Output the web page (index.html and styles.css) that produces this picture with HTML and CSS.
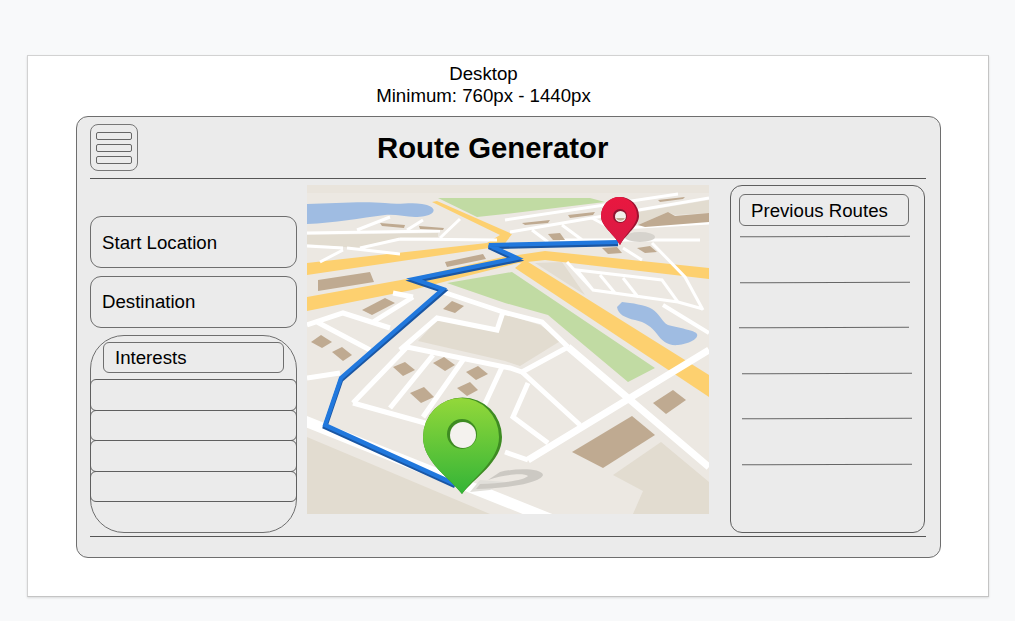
FILE: index.html
```html
<!DOCTYPE html>
<html lang="en">
<head>
<meta charset="utf-8">
<title>Route Generator wireframe</title>
<link rel="stylesheet" href="styles.css">
</head>
<body>
<main class="sheet">
  <p class="caption">Desktop<br>Minimum: 760px - 1440px</p>
  <section class="frame">
    <header class="topbar">
      <button class="menu" aria-label="Menu"><span></span><span></span><span></span></button>
      <h1 class="title">Route Generator</h1>
    </header>
    <div class="content">
      <aside class="left">
        <div class="field">Start Location</div>
        <div class="field">Destination</div>
        <div class="interests">
          <div class="interests-title">Interests</div>
          <div class="interest"></div>
          <div class="interest"></div>
          <div class="interest"></div>
          <div class="interest"></div>
        </div>
      </aside>
      <svg class="map" viewBox="307 185 402 329" role="img" aria-label="Map with a route">
        <defs>
          <linearGradient id="greenPin" x1="0" y1="0" x2="0" y2="1">
            <stop offset="0" stop-color="#93d83a"/>
            <stop offset="1" stop-color="#33b437"/>
          </linearGradient>
          <linearGradient id="redPin" x1="0" y1="0" x2="0" y2="1">
            <stop offset="0" stop-color="#e9173f"/>
            <stop offset="1" stop-color="#d91a45"/>
          </linearGradient>
        </defs>
        <rect x="307" y="185" width="402" height="329" fill="#ece8e2"/>
        <rect x="307" y="185" width="402" height="8" fill="#e9e4dc"/>
        <g fill="#e2dcd0">
          <polygon points="307,437 490,514 307,514"/>
          <polygon points="613,475 661,442 709,482 709,514 633,514 643,491"/>
          <polygon points="307,235 438,233 438,237 400,238 357,248 307,244"/>
          <polygon points="638,212 709,200 709,213 675,215 668,212 638,225"/>
          <polygon points="535,263 562,262 585,295"/>
          <polygon points="418,341 437,320 497,331 505,314 540,325 562,340 520,366 505,361"/>
        </g>
        <path fill="#9fbce2" d="M307 204C335 203 365 201 385 203C400 205 410 202 422 204C437 206 437 214 425 216C410 219 400 214 385 215C360 218 335 223 307 224Z"/>
        <path fill="#9fbce2" d="M617 307L622 302C632 303 645 305 652 309C660 314 662 322 668 325C678 328 695 330 697 334C699 339 688 344 678 345C668 346 662 341 657 334C652 327 645 322 635 320C625 318 618 314 617 307Z"/>
        <g fill="#c1dba3">
          <polygon points="438,198 590,198 605,202 505,214 477,217"/>
          <polygon points="447,283 512,272 655,368 628,382 548,315 505,303"/>
        </g>
        <g fill="#fdd06f">
          <polygon points="432,202 437,201 512,234 503,246 307,275 307,263 487,243 500,235"/>
          <polygon points="307,297 412,278 507,256 518,255 545,251 709,268 709,279 545,260 518,263 412,290 307,311"/>
          <polygon points="525,260 709,375 709,397 515,268"/>
        </g>
        <g fill="none" stroke="#fff" stroke-width="3">
          <path d="M307 233L440 231M400 239L497 240M360 248L400 239M307 246L343 248M347 248L400 254M320 262L343 250M357 230L390 217M407 230L423 220M440 238L460 219"/>
          <path d="M505 220L678 194M510 232L709 198M532 230L548 242M562 225L585 242M592 218L605 225M622 228L709 223M560 240L700 240M623 248L642 260"/>
          <path d="M652 243L685 277L703 310M577 270L662 280L678 302L593 290ZM600 275L615 293M623 278L638 297M567 262L593 290M678 302L703 309"/>
        </g>
        <path d="M663 305L709 333" fill="none" stroke="#fff" stroke-width="4"/>
        <g fill="none" stroke="#fff" stroke-width="5">
          <path d="M307 325L343 313L390 328M317 322L370 350M413 297L373 322M393 293L413 297"/>
          <path d="M443 292L503 312L497 330L437 318L400 350M503 312L542 322L568 347"/>
          <path d="M353 403L407 347L510 368L522 372L568 347M390 408L433 355M423 417L463 360M483 408L503 365M353 403L443 428"/>
          <path d="M307 378L340 373M522 372L580 425M528 383L513 417L548 443M505 452L528 460"/>
        </g>
        <g fill="none" stroke="#fff" stroke-width="7">
          <path d="M528 460L709 350M568 347L709 467"/>
        </g>
        <path d="M300 419L565 525" fill="none" stroke="#fff" stroke-width="11"/>
        <g fill="#bfaa91">
          <polygon points="380,223 405,225 404,228 382,226"/>
          <polygon points="419,226 444,228 443,230 420,229"/>
          <polygon points="445,262 483,254 486,259 447,267"/>
          <polygon points="318,280 370,272 374,282 318,291"/>
          <polygon points="362,310 385,298 395,303 372,315"/>
          <polygon points="443,309 452,301 464,306 455,313"/>
          <polygon points="311,342 321,335 332,342 322,348"/>
          <polygon points="332,352 342,347 352,355 343,361"/>
          <polygon points="393,367 405,362 415,370 403,376"/>
          <polygon points="433,363 444,357 455,365 445,371"/>
          <polygon points="466,372 478,366 488,374 476,380"/>
          <polygon points="457,388 470,382 478,390 467,396"/>
          <polygon points="410,393 424,387 434,397 421,403"/>
          <polygon points="653,403 673,390 686,400 666,414"/>
          <polygon points="572,452 632,416 655,435 603,468"/>
          <polygon points="522,223 550,220 548,223 525,225"/>
          <polygon points="568,215 595,212 593,215 570,218"/>
          <polygon points="658,200 685,197 683,199 660,202"/>
          <polygon points="638,225 668,212 675,216 709,213 709,222 645,227"/>
          <polygon points="548,234 560,233 565,240 553,240"/>
          <polygon points="602,248 617,247 622,253 608,254"/>
          <polygon points="637,248 650,246 657,252 645,253"/>
        </g>
        <ellipse cx="640" cy="237" rx="15" ry="5" fill="#d6d3cd"/>
        <path fill="#e1dfda" d="M470 492L490 490L505 482L480 480Z"/>
        <path fill="#ccc9c3" d="M476 489C500 489 540 484 543 475C542 468 515 468 500 472L488 480C505 474 525 473 528 476C525 480 500 484 480 484Z"/>
        <polyline points="455,486 325,427 341,380 444,291 414,281 517,260 489,247 618,244" fill="none" stroke="#1a56a3" stroke-width="4.500"/>
        <polyline points="455,484 325,425 341,378 443,289 414,279 517,258 489,245 618,242" fill="none" stroke="#2178dd" stroke-width="4.200"/>
        <path fill="#9c1230" d="M620 245C614 234 601 226 601 216A19 19 0 1 1 639 216C639 226 626 234 620 245Z"/>
        <path fill="url(#redPin)" d="M620 245C614 234 601 226 601 216A18 19 0 1 1 637 216C637 225 625 234 620 245Z"/>
        <circle cx="620" cy="216" r="7" fill="#8e1530"/>
        <circle cx="620.500" cy="216.500" r="5.500" fill="#f3f0ea"/>
        <path d="M616 218A5 5 0 0 0 625 218Z" fill="#bfaa91"/>
        <path fill="#3e8b22" d="M462 494C450 478 423 462 423 437A39 39 0 1 1 502 437C502 462 474 478 462 494Z"/>
        <path fill="url(#greenPin)" d="M462 494C450 478 423 462 423 437A38 39 0 1 1 499 437C499 461 472 478 462 494Z"/>
        <circle cx="462" cy="434" r="15" fill="#3e8b22"/>
        <circle cx="463" cy="435" r="13" fill="#f4f2ee"/>
      </svg>
      <aside class="right">
        <div class="routes-title">Previous Routes</div>
        <div class="routes">
          <div class="route"></div>
          <div class="route"></div>
          <div class="route route-back"></div>
          <div class="route route-forward"></div>
          <div class="route route-forward"></div>
          <div class="route route-forward"></div>
        </div>
      </aside>
    </div>
  </section>
</main>
</body>
</html>
```

FILE: styles.css
```css
* {
  box-sizing: border-box;
}

html,
body {
  margin: 0;
  height: 100%;
}

body {
  background: #f8f9fa;
  padding: 55px 0 0 27px;
  font-family: "Liberation Sans", Arial, sans-serif;
  color: #000;
  overflow: hidden;
}

.sheet {
  width: 962px;
  height: 542px;
  background: #fff;
  border: 1px solid #d2d2d2;
  border-right-color: #c4c4c4;
  border-bottom-color: #c4c4c4;
  box-shadow: 0 1px 2px rgba(0, 0, 0, 0.12);
  padding: 7px 0 0 48px;
}

.caption {
  width: 815px;
  margin: 0;
  text-align: center;
  font-size: 18.670px;
  line-height: 22px;
}

.frame {
  width: 865px;
  height: 442px;
  margin-top: 9px;
  padding: 7px 14px 0 13px;
  background: #ebebeb;
  border: 1px solid #6e6e6e;
  border-radius: 12px;
}

.topbar {
  display: flex;
  align-items: center;
  height: 55px;
  padding-bottom: 7px;
  border-bottom: 1px solid #555;
}

.menu {
  flex: none;
  display: flex;
  flex-direction: column;
  justify-content: center;
  gap: 4px;
  width: 48px;
  height: 47px;
  padding: 0 5px;
  background: transparent;
  border: 1px solid #777;
  border-radius: 8px;
}

.menu span {
  display: block;
  height: 8px;
  border: 1px solid #666;
  border-radius: 2px;
}

.title {
  margin: 0 0 0 239px;
  font-size: 29.330px;
  font-weight: 700;
  line-height: 34px;
}

.content {
  display: flex;
  height: 358px;
  border-bottom: 1px solid #555;
}

.left {
  flex: none;
  width: 207px;
  padding-top: 37px;
}

.field {
  display: flex;
  align-items: center;
  height: 52px;
  margin-bottom: 8px;
  padding: 2px 0 0 11px;
  font-size: 18.670px;
  border: 1px solid #6e6e6e;
  border-radius: 11px;
}

.field + .field {
  margin-bottom: 7px;
  padding-top: 0;
}

.interests {
  height: 198px;
  padding-top: 6px;
  border: 1px solid #6e6e6e;
  border-radius: 34px;
}

.interests-title {
  display: flex;
  align-items: center;
  width: 181px;
  height: 31px;
  margin: 0 0 6px 12px;
  padding: 0 0 0 11px;
  font-size: 18.670px;
  border: 1px solid #6e6e6e;
  border-radius: 6px;
}

.interest {
  height: 31.500px;
  margin: -1px -1px 0;
  border: 1px solid #5f5f5f;
  border-radius: 6px;
}

.interests-title + .interest {
  margin-top: 0;
}

.map {
  flex: none;
  display: block;
  width: 402px;
  height: 329px;
  margin: 6px 21px 0 10px;
}

.right {
  flex: none;
  width: 195px;
  height: 348px;
  margin-top: 6px;
  padding: 8px 0 0 8px;
  border: 1px solid #5f5f5f;
  border-radius: 12px;
}

.routes-title {
  display: flex;
  align-items: center;
  width: 170px;
  height: 32px;
  padding: 2px 0 0 11px;
  font-size: 18.670px;
  border: 1px solid #6e6e6e;
  border-radius: 6px;
}

.routes {
  display: flex;
  flex-direction: column;
  gap: 44.500px;
  margin-top: 10px;
}

.route {
  width: 170px;
  height: 1px;
  margin-left: 1px;
  background: #666;
  transform: rotate(-0.25deg);
}

.route-back {
  margin-left: 0;
}

.route-forward {
  margin-left: 3px;
}
```
